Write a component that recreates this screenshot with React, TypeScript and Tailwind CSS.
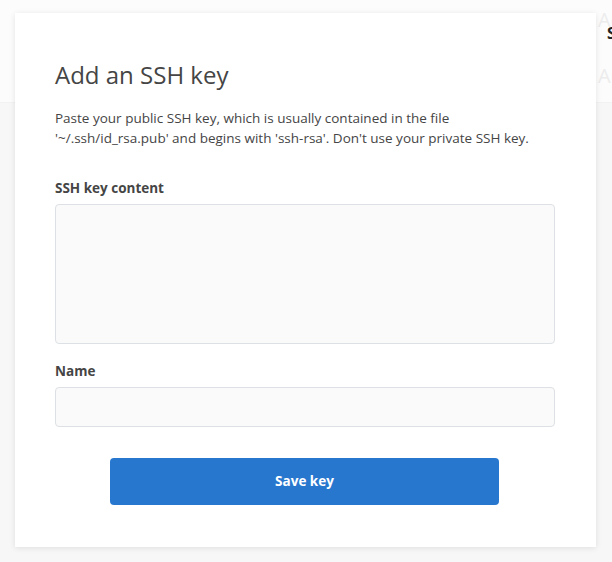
import React from 'react';

const font = { fontFamily: '"Open Sans", "Noto Sans", sans-serif' };

const Field = ({ label, children }: { label: string; children: React.ReactNode }) => (
  <div className="flex flex-col gap-[6px]">
    <label className="text-[13.5px] leading-[20px] font-bold text-[#454545]">{label}</label>
    {children}
  </div>
);

export default function App() {
  return (
    <div className="relative h-[562px] w-[612px] overflow-hidden bg-[#f7f7f7]" style={font}>
      {/* page behind the overlay */}
      <div className="flex h-[103px] justify-end bg-[#fcfcfc] border-b border-[#f2f2f2]">
        <div className="flex w-[14px] flex-col pt-[10px] leading-none">
          <span className="text-[20px] text-[#ececec] whitespace-nowrap">Ac</span>
          <span className="-mt-[5px] ml-[9px] text-[16px] font-bold text-[#222]">S</span>
          <span className="mt-[25px] text-[20px] text-[#ececec] whitespace-nowrap">Au</span>
        </div>
      </div>

      <div className="absolute left-[15px] top-[13px] flex w-[581px] h-[534px] flex-col bg-white shadow-[0_1px_6px_rgba(0,0,0,0.1)] px-[40px] pt-[44px]">
        <h2 className="text-[24px] leading-[36px] text-[#454545] font-normal">Add an SSH key</h2>
        <p className="mt-[15px] text-[13.5px] leading-[20px] text-[#454545]">
          Paste your public SSH key, which is usually contained in the file
          <br />
          '~/.ssh/id_rsa.pub' and begins with 'ssh-rsa'. Don't use your private SSH key.
        </p>
        <div className="mt-[30px] flex flex-col gap-[17px]">
          <Field label="SSH key content">
            <textarea className="block w-[500px] h-[140px] resize-none rounded-[4px] border border-[#dde1e5] bg-[#fafafa]" />
          </Field>
          <Field label="Name">
            <input className="block w-[500px] h-[40px] rounded-[4px] border border-[#dde1e5] bg-[#fafafa]" />
          </Field>
        </div>
        <div className="mt-[31px] flex pl-[55px]">
          <button className="flex w-[389px] h-[47px] items-center justify-center rounded-[4px] bg-[#2777cf] text-white text-[13.5px] font-bold">
            Save key
          </button>
        </div>
      </div>
    </div>
  );
}
